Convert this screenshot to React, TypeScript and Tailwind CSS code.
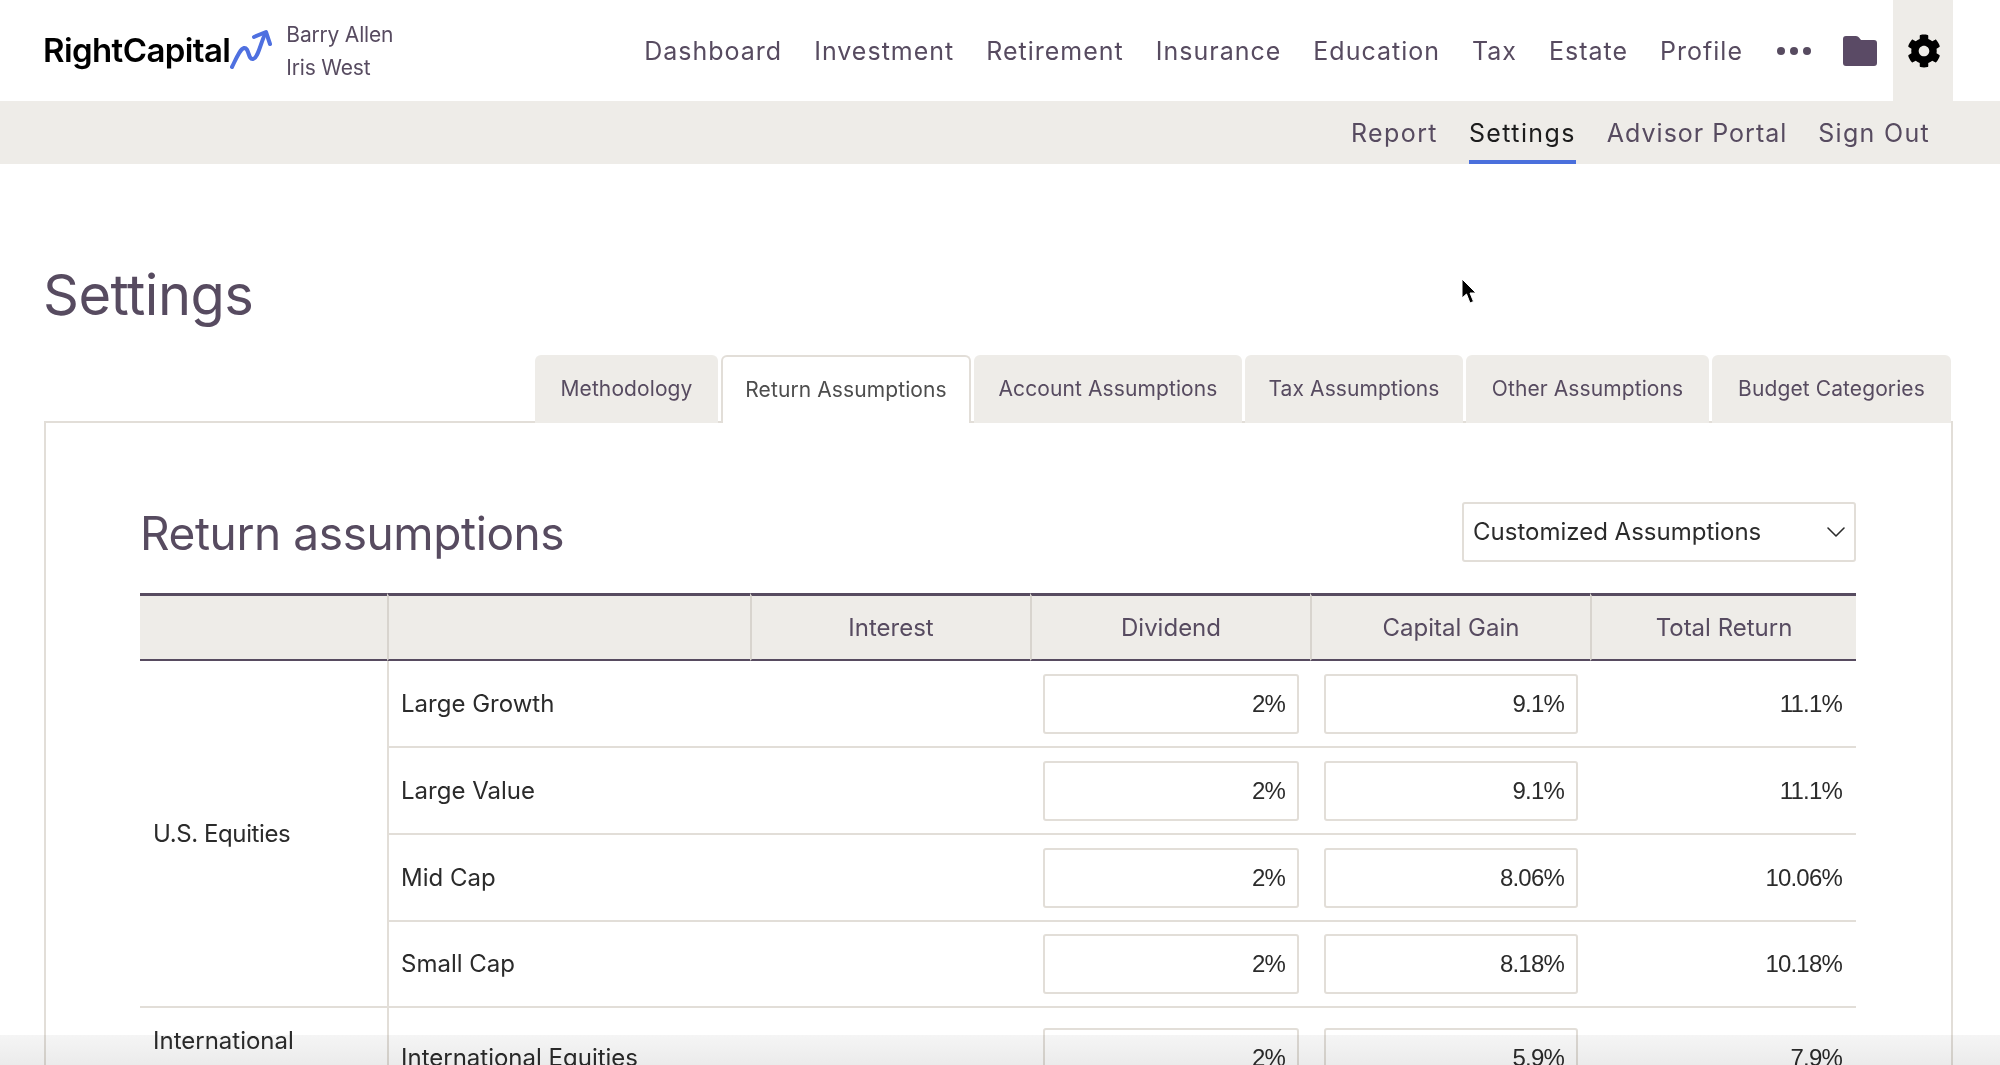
import { ChevronDown } from 'lucide-react';
import { FaCog } from 'react-icons/fa';

const mainNav = ['Dashboard', 'Investment', 'Retirement', 'Insurance', 'Education', 'Tax', 'Estate', 'Profile'];
const tabs = ['Methodology', 'Return Assumptions', 'Account Assumptions', 'Tax Assumptions', 'Other Assumptions', 'Budget Categories'];
const tabWidths = ['w-[183px]', 'w-[250px]', 'w-[268px]', 'w-[218px]', 'w-[243px]', 'w-[239px]'];

const usRows = [
  { name: 'Large Growth', dividend: '2%', gain: '9.1%', total: '11.1%', height: 'h-[87px]' },
  { name: 'Large Value', dividend: '2%', gain: '9.1%', total: '11.1%', height: 'h-[87px]' },
  { name: 'Mid Cap', dividend: '2%', gain: '8.06%', total: '10.06%', height: 'h-[87px]' },
  { name: 'Small Cap', dividend: '2%', gain: '8.18%', total: '10.18%', height: 'h-[86px]' },
];

function Logo() {
  return (
    <div className="-ml-px flex items-center">
      <span className="text-[33px] font-semibold tracking-[-0.6px] text-black">RightCapital</span>
      <svg width="42" height="40" viewBox="230 30 42 40" fill="none" stroke="#4f70e0" strokeWidth="4" strokeLinecap="round" strokeLinejoin="round" className="-mt-1">
        <path d="M232 68 C236 60 240 50 244 49 C249 48 248 61 253 60 C258 59 260 46 265 35" />
        <path d="M254 38 L266 33 L270 45" />
      </svg>
    </div>
  );
}

function PercentInput({ value }: { value: string }) {
  return (
    <input
      readOnly
      value={value}
      className="h-[60px] w-full rounded-[3px] border-2 border-[#e2ded8] bg-white px-[12px] text-right font-['Liberation_Sans',sans-serif] text-[24px] tracking-[-0.8px] text-[#2b2b2b] outline-none"
    />
  );
}

export default function App() {
  return (
    <div className="relative h-[1065px] w-[2000px] overflow-hidden bg-white font-['Inter','Liberation_Sans',sans-serif] text-[#574b60]">
      <header className="flex h-[101px] items-center pl-[44px] pr-[47px]">
        <Logo />
        <div className="ml-[14px] text-[21px] leading-[33px] tracking-[-0.2px]">
          <div>Barry Allen</div>
          <div>Iris West</div>
        </div>
        <nav className="ml-auto flex items-center gap-[32px] pt-[2px] text-[25px] tracking-[1px]">
          {mainNav.map((item) => (
            <span key={item}>{item}</span>
          ))}
        </nav>
        <div className="ml-[34px] flex gap-[5px]">
          <span className="h-[8px] w-[8px] rounded-full bg-[#574b60]" />
          <span className="h-[8px] w-[8px] rounded-full bg-[#574b60]" />
          <span className="h-[8px] w-[8px] rounded-full bg-[#574b60]" />
        </div>
        <svg width="34" height="30" viewBox="0 0 34 30" className="ml-[32px]" fill="#5a4a65">
          <path d="M3 0 H13 Q15 0 16 1.5 L18 4 H31 Q34 4 34 7 V27 Q34 30 31 30 H3 Q0 30 0 27 V3 Q0 0 3 0 Z" />
        </svg>
        <div className="ml-[16px] flex h-[101px] w-[60px] items-center justify-center bg-[#eeece8] pl-[2px]">
          <FaCog className="text-[34px] text-black" />
        </div>
      </header>

      <div className="flex h-[63px] items-stretch justify-end gap-[31px] bg-[#eeece8] pr-[70px] text-[25px]">
        <span className="flex items-center pt-[2px] tracking-[1.4px]">Report</span>
        <span className="flex items-center border-b-4 border-[#4a6fdc] pt-[6px] tracking-[1.4px] text-[#1c1c1c]">Settings</span>
        <span className="flex items-center pt-[2px] tracking-[1px]">Advisor Portal</span>
        <span className="flex items-center pt-[2px] tracking-[1.3px]">Sign Out</span>
      </div>

      <main className="pl-[44px] pr-[47px] pt-[98px]">
        <h1 className="-ml-px text-[56px] leading-[67px] font-normal tracking-[-0.5px]">Settings</h1>

        <div className="mt-[26px] flex justify-end gap-[3px] pr-[2px]">
          {tabs.map((tab, i) => (
            <div
              key={tab}
              className={`relative z-10 -mb-[2px] flex h-[68px] items-center justify-center rounded-t-[6px] text-[21px] tracking-[0.1px] ${tabWidths[i]} ${
                i === 1 ? 'border-2 border-b-0 border-[#e2ded8] bg-white text-[#4d4d4d]' : 'bg-[#eeece8]'
              }`}
            >
              {tab}
            </div>
          ))}
        </div>

        <section className="h-[800px] border-2 border-[#e2ded8] pl-[94px] pr-[95px] pt-[79px]">
          <div className="flex h-[60px] items-center justify-between">
            <h2 className="pt-[2px] text-[46px] font-normal tracking-[-0.4px]">Return assumptions</h2>
            <div className="flex h-[60px] w-[394px] items-center justify-between rounded-[3px] border-2 border-[#e2ded8] pl-[9px] pr-[2px] text-[24px] text-[#2b2b2b]">
              <span>Customized Assumptions</span>
              <ChevronDown className="h-[32px] w-[32px]" strokeWidth={1.2} />
            </div>
          </div>

          <table className="mt-[31px] w-[1716px] table-fixed border-separate border-spacing-0 text-[24px] text-[#2b2b2b]">
            <colgroup>
              <col className="w-[247px]" />
              <col className="w-[363px]" />
              <col className="w-[280px]" />
              <col className="w-[280px]" />
              <col className="w-[280px]" />
              <col className="w-[266px]" />
            </colgroup>
            <thead>
              <tr className="text-[#574b60]">
                <th className="h-[68px] border-y-[3px] border-b-2 border-[#574b60] bg-[#eeece8]" />
                <th className="border-y-[3px] border-b-2 border-l-2 border-[#574b60] border-l-[#d8d4ce] bg-[#eeece8]" />
                {['Interest', 'Dividend', 'Capital Gain', 'Total Return'].map((col) => (
                  <th key={col} className="border-y-[3px] border-b-2 border-l-2 border-[#574b60] border-l-[#d8d4ce] bg-[#eeece8] font-normal">
                    {col}
                  </th>
                ))}
              </tr>
            </thead>
            <tbody>
              {usRows.map((row, i) => (
                <tr key={row.name}>
                  {i === 0 && (
                    <td rowSpan={4} className="border-b-2 border-[#e2ded8] pl-[13px] tracking-[-0.4px]">U.S. Equities</td>
                  )}
                  <td className={`${row.height} border-b-2 border-l-2 border-[#e2ded8] pl-[12px]`}>{row.name}</td>
                  <td className="border-b-2 border-[#e2ded8]" />
                  <td className="border-b-2 border-[#e2ded8] pl-[13px] pr-[11px]"><PercentInput value={row.dividend} /></td>
                  <td className="border-b-2 border-[#e2ded8] pl-[14px] pr-[12px]"><PercentInput value={row.gain} /></td>
                  <td className="border-b-2 border-[#e2ded8] pr-[14px] text-right font-['Liberation_Sans',sans-serif] tracking-[-0.8px]">{row.total}</td>
                </tr>
              ))}
              <tr>
                <td rowSpan={2} className="pl-[13px] align-top pt-[16px] leading-[34px]">
                  International
                  <br />
                  Equities
                </td>
                <td className="h-[102px] border-b-2 border-l-2 border-[#e2ded8] pl-[12px]">International Equities</td>
                <td className="border-b-2 border-[#e2ded8]" />
                <td className="border-b-2 border-[#e2ded8] pl-[13px] pr-[11px]"><PercentInput value="2%" /></td>
                <td className="border-b-2 border-[#e2ded8] pl-[14px] pr-[12px]"><PercentInput value="5.9%" /></td>
                <td className="border-b-2 border-[#e2ded8] pr-[14px] text-right font-['Liberation_Sans',sans-serif] tracking-[-0.8px]">7.9%</td>
              </tr>
            </tbody>
          </table>
        </section>
      </main>

      {/* screen recording fade along the bottom edge, and the mouse pointer */}
      <div className="pointer-events-none absolute inset-x-0 bottom-0 z-20 h-[30px] bg-gradient-to-b from-[#f5f5f5] to-[#ebebeb] mix-blend-multiply" />
      <svg width="17" height="27" viewBox="0 0 17 27" className="absolute left-[1461px] top-[278px] z-30">
        <path d="M1 1 V20 L5.5 16 L9 25 L12.5 23.5 L9 15 H15 Z" fill="#000" stroke="#fff" strokeWidth="1" />
      </svg>
    </div>
  );
}
